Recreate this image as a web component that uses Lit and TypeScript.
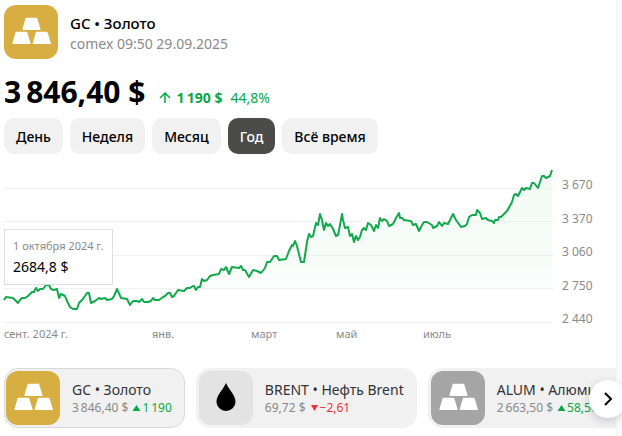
import { LitElement, html, svg, css } from "lit";
import { customElement, state } from "lit/decorators.js";

type Point = [number, number];

const TOP = 165;
const BASE = 323;
const WIDTH = 549;

const GRID = [189, 222, 256, 289, 323];
const LEVELS = ["3 670", "3 370", "3 060", "2 750", "2 440"];
const MONTHS = ["сент. 2024 г.", "янв.", "март", "май", "июль"];
const PERIODS = ["День", "Неделя", "Месяц", "Год", "Всё время"];

const SERIES: Point[] = (
  "4,300 6,297 13,298 15,300 18,303 20,300 22,298 25,298 28,296 32,292 34,292 36,288 38,291 40,289 43,289 46,285 49,285 " +
  "51,289 54,290 57,289 59,298 61,294 65,296 67,301 70,307 73,309 77,309 79,303 82,300 85,296 87,293 89,293 91,303 95,301 " +
  "99,298 101,299 105,298 107,300 112,299 114,296 117,289 121,298 127,299 130,305 133,301 137,301 139,302 142,299 144,302 " +
  "148,302 151,301 153,298 155,300 159,300 163,297 165,296 168,293 170,293 172,297 174,296 178,290 184,291 187,288 190,288 " +
  "193,286 194,286 196,290 198,287 200,287 202,279 204,281 207,280 210,276 213,275 219,274 221,269 224,270 226,267 229,274 " +
  "232,267 239,268 241,266 243,270 245,270 249,277 253,270 257,271 261,273 265,268 267,262 270,262 274,256 277,256 279,260 " +
  "286,259 289,251 292,245 293,246 295,241 297,246 301,262 304,262 307,242 309,234 311,237 313,236 316,223 318,225 320,214 " +
  "322,220 324,230 326,223 328,226 330,224 333,229 336,236 338,235 340,225 342,214 343,220 345,228 348,227 350,236 352,234 " +
  "354,242 356,236 358,240 360,237 362,230 364,228 366,230 368,223 371,225 374,231 376,225 378,228 380,218 382,221 384,219 " +
  "387,221 389,226 393,224 396,218 399,213 400,218 402,218 404,220 411,221 413,225 416,224 419,231 422,225 424,222 427,222 " +
  "432,225 433,228 437,226 439,222 442,226 444,223 448,224 451,218 453,214 456,220 461,227 465,226 467,224 469,217 472,215 " +
  "476,215 477,210 480,213 482,219 486,218 488,220 492,221 494,223 495,220 498,220 499,217 501,217 507,211 512,202 514,195 " +
  "516,194 518,196 522,188 524,190 526,188 530,189 532,183 534,183 538,188 542,176 544,176 546,178 550,176 552,170"
)
  .split(" ")
  .map((pair) => {
    const [x, y] = pair.split(",").map(Number);
    return [x - 4, y - TOP] as Point;
  });

const LINE = "M" + SERIES.map((p) => p.join(" ")).join("L");
const AREA = `${LINE}V${BASE - TOP}H0Z`;

interface Asset {
  name: string;
  price: string;
  change: string;
  up: boolean;
  kind: "gold" | "oil" | "metal";
}

const ASSETS: Asset[] = [
  { name: "GC • Золото", price: "3\u2009846,40 $", change: "1\u2009190", up: true, kind: "gold" },
  { name: "BRENT • Нефть Brent", price: "69,72 $", change: "−2,61", up: false, kind: "oil" },
  { name: "ALUM • Алюминий", price: "2\u2009663,50 $", change: "58,50", up: true, kind: "metal" },
];

const INGOT = "h10.400q.8 0 1.100.8l3.300 10.700q.2.8-.6.8h-17q-.8 0-.6-.8l3.100-10.700q.3-.8 1.100-.8z";
const ingots = svg`<path fill="#fff" d=${`M21.800 12.700${INGOT}M11.800 26.700${INGOT}M32.100 26.700${INGOT}`} />`;
const drop = svg`<path fill="#000" d="M27 12C30.500 19.500 36.500 24 36.500 31A9.500 9 0 0 1 17.500 31C17.500 24 23.500 19.500 27 12Z"/>`;

@customElement("asset-icon")
export class AssetIcon extends LitElement {
  static properties = { kind: { type: String, reflect: true } };
  declare kind: string;

  static styles = css`
    :host {
      display: block;
      flex: none;
      width: 54px;
      height: 54px;
      border-radius: 12px;
      background: #d7ae42;
    }
    :host([kind="oil"]) {
      background: #e3e3e3;
    }
    :host([kind="metal"]) {
      background: #a5a5a5;
    }
    svg {
      display: block;
    }
  `;

  render() {
    return html`<svg width="54" height="54" viewBox="0 0 54 54" aria-hidden="true">
      ${this.kind === "oil" ? drop : ingots}
    </svg>`;
  }
}

@customElement("app-root")
export class AppRoot extends LitElement {
  @state() private period = "Год";

  static styles = css`
    :host {
      display: block;
      padding-right: 5px;
      background: #fafafa;
      overflow: hidden;
      font-family: "Noto Sans", sans-serif;
      color: #000;
    }
    .panel {
      box-sizing: border-box;
      padding: 5px 0 8px 4px;
      background: #fff;
      border-right: 1px solid #f7f7f7;
    }
    .head {
      display: flex;
      align-items: center;
      gap: 12px;
    }
    .id {
      padding-top: 4px;
    }
    .title {
      margin: 0;
      font-size: 15px;
      line-height: 20px;
      font-weight: 500;
    }
    .sub {
      margin: 0;
      font-size: 14px;
      line-height: 22px;
      color: #8a8a8a;
    }
    .quote {
      display: flex;
      align-items: baseline;
      margin-top: 13px;
      line-height: 40px;
      font-size: 14px;
      color: #0aa748;
    }
    .price {
      font-size: 30px;
      font-weight: 700;
      color: #000;
    }
    .arrow {
      margin: 0 5px 0 14px;
    }
    .delta {
      font-weight: 700;
      margin-right: 8px;
    }
    .periods {
      display: flex;
      gap: 7px;
    }
    .period {
      height: 36px;
      padding: 0 12px;
      border: 0;
      border-radius: 10px;
      background: #f1f1f1;
      font: 500 14px "Noto Sans", sans-serif;
      color: #000;
    }
    .period.on {
      background: #4b4b4a;
      color: #fff;
    }
    .chart {
      position: relative;
      display: grid;
      grid-template-columns: minmax(0, 1fr) 54px;
      column-gap: 9px;
      margin-top: 11px;
      font-size: 12px;
      line-height: 16px;
      color: #8a8a8a;
    }
    .plot {
      display: block;
      width: 100%;
      height: 160px;
      overflow: visible;
    }
    .grid {
      stroke: #f0f0f0;
      vector-effect: non-scaling-stroke;
    }
    .line {
      fill: none;
      stroke: #12a84c;
      stroke-width: 2;
      stroke-linejoin: round;
      vector-effect: non-scaling-stroke;
    }
    .levels {
      grid-column: 2;
      grid-row: 1 / span 2;
      display: flex;
      flex-direction: column;
      justify-content: space-between;
      height: 150px;
      margin-top: 12px;
    }
    .months {
      display: grid;
      grid-template-columns: 148fr 99fr 85fr 87fr 130fr;
      margin-top: 1px;
      font-size: 11px;
      white-space: nowrap;
    }
    .tip {
      position: absolute;
      left: 0;
      top: 64px;
      padding: 8px 8px 7px;
      border: 1px solid #dedede;
      background: #fff;
      font-size: 11px;
      white-space: nowrap;
    }
    .tip-value {
      margin-top: 3px;
      font-size: 14px;
      line-height: 20px;
      color: #000;
    }
    .strip {
      position: relative;
      margin-top: 26px;
    }
    .cards {
      display: flex;
      gap: 11px;
      overflow: hidden;
    }
    .card {
      display: flex;
      flex: none;
      align-items: center;
      gap: 12px;
      box-sizing: border-box;
      height: 60px;
      padding: 0 12px 0 2px;
      border: 1px solid #f1f1f1;
      border-radius: 14px;
      background: #f1f1f1;
      text-decoration: none;
      white-space: nowrap;
      color: #333;
    }
    .card.current {
      padding-left: 1px;
      border-color: #d9d9d9;
    }
    .name {
      display: block;
      font-size: 14px;
      line-height: 20px;
    }
    .row {
      display: flex;
      align-items: center;
      gap: 4px;
      font-size: 12px;
      line-height: 16px;
      color: #8a8a8a;
    }
    .change {
      display: flex;
      align-items: center;
      gap: 1px;
      color: #0aa748;
    }
    .change.down {
      color: #f0323c;
    }
    .next {
      position: absolute;
      right: -11px;
      top: 12px;
      width: 38px;
      height: 38px;
      padding: 0;
      border: 0;
      border-radius: 50%;
      background: #fff;
      box-shadow: 0 3px 10px rgba(0, 0, 40, 0.16);
    }
    .next svg {
      display: block;
      margin: auto;
    }
  `;

  private card(a: Asset, i: number) {
    return html`<a class="card ${i === 0 ? "current" : ""}" href="#${a.kind}">
      <asset-icon kind=${a.kind}></asset-icon>
      <span>
        <span class="name">${a.name}</span>
        <span class="row">
          ${a.price}
          <span class="change ${a.up ? "" : "down"}">
            <svg width="9" height="8" viewBox="0 0 9 8" aria-hidden="true">
              <path fill="currentColor" d=${a.up ? "M4.500 1L8.500 7H.5Z" : "M4.500 7L8 1H1Z"} />
            </svg>
            ${a.change}
          </span>
        </span>
      </span>
    </a>`;
  }

  render() {
    return html`<main class="panel">
      <header class="head">
        <asset-icon kind="gold"></asset-icon>
        <div class="id">
          <h1 class="title">GC • Золото</h1>
          <p class="sub">comex 09:50 29.09.2025</p>
        </div>
      </header>
      <div class="quote">
        <span class="price">3\u2009846,40 $</span>
        <svg class="arrow" width="12" height="11" viewBox="0 0 12 11" aria-hidden="true">
          <path d="M6 11V1M1 6l5-5 5 5" fill="none" stroke="currentColor" stroke-width="1.500" />
        </svg>
        <span class="delta">1\u2009190 $</span>
        <span>44,8%</span>
      </div>
      <div class="periods">
        ${PERIODS.map(
          (p) => html`<button
            class="period ${p === this.period ? "on" : ""}"
            aria-pressed=${p === this.period}
            @click=${() => (this.period = p)}
          >${p}</button>`,
        )}
      </div>
      <section class="chart">
        <svg class="plot" viewBox="0 0 ${WIDTH} 160" preserveAspectRatio="none" role="img" aria-label="GC">
          <defs>
            <linearGradient id="fade" x1="0" y1="0" x2="0" y2="1">
              <stop offset="0" stop-color="#12a84c" stop-opacity="0.050" />
              <stop offset="0.600" stop-color="#12a84c" stop-opacity="0.035" />
              <stop offset="0.850" stop-color="#12a84c" stop-opacity="0" />
            </linearGradient>
          </defs>
          <path d=${AREA} fill="url(#fade)" />
          ${GRID.map((y) => svg`<path class="grid" d="M0 ${y - TOP - 0.5}H${WIDTH}" />`)}
          <path class="line" d=${LINE} />
        </svg>
        <div class="levels">${LEVELS.map((l) => html`<span>${l}</span>`)}</div>
        <div class="months">${MONTHS.map((m) => html`<span>${m}</span>`)}</div>
        <div class="tip">
          <div>1 октября 2024 г.</div>
          <div class="tip-value">2684,8 $</div>
        </div>
      </section>
      <nav class="strip">
        <div class="cards">${ASSETS.map((a, i) => this.card(a, i))}</div>
        <button class="next" aria-label="Вперёд">
          <svg width="16" height="16" viewBox="0 0 16 16">
            <path d="M5 2l6 6-6 6" fill="none" stroke="#000" stroke-width="2" />
          </svg>
        </button>
      </nav>
    </main>`;
  }
}
